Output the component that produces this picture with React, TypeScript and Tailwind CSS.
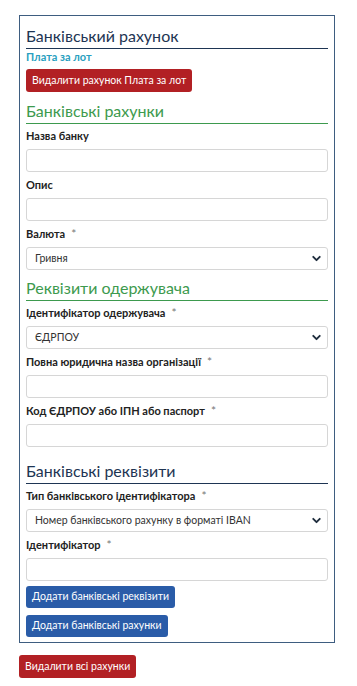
import { ChevronDown } from 'lucide-react';

const font = { fontFamily: 'Lato, "Liberation Sans", sans-serif' };

const Label = ({ text, req, first }: { text: string; req?: boolean; first?: boolean }) => (
  <div className={(first ? 'mt-[4px] ' : 'mt-[5px] ') + 'h-[16px] text-[11px] leading-[16px] font-bold text-[#222]'}>
    {text}
    {req && <span className="ml-[6px] text-[12px] font-normal text-[#777]">*</span>}
  </div>
);

const Input = () => (
  <div className="mt-[5px] h-[23px] w-full rounded-[3px] border border-[#d6d6d6] bg-white" />
);

const Select = ({ value }: { value: string }) => (
  <div className="mt-[5px] flex h-[23px] w-full items-center justify-between rounded-[3px] border border-[#d6d6d6] bg-white pl-[8px] pr-[4px] text-[10.5px] text-[#333]">
    <span>{value}</span>
    <ChevronDown className="h-[13px] w-[13px] text-[#1f2d3d]" strokeWidth={3.5} />
  </div>
);

const Heading = ({ text, color }: { text: string; color: 'navy' | 'green' }) => (
  <h3
    className={
      color === 'navy'
        ? 'h-[24px] border-b border-[#1e3553] text-[16px] leading-[22px] text-[#1e3553]'
        : 'h-[24px] border-b border-[#3d9a4e] text-[16px] leading-[22px] text-[#3d9a4e]'
    }
  >
    {text}
  </h3>
);

export default function App() {
  return (
    <div className="min-h-screen bg-white pt-[15px] pl-[19px]" style={font}>
      <div className="w-[316px] border border-[#3e5d80] px-[6px] pt-[9px] pb-[5px]">
        <Heading text="Банківський рахунок" color="navy" />
        <div className="h-[16px] text-[11px] leading-[16px] font-bold text-[#2a9fc0]">Плата за лот</div>
        <button className="mt-[4px] h-[23px] rounded-[3px] bg-[#b22024] px-[6px] text-[10.5px] text-white">
          Видалити рахунок Плата за лот
        </button>

        <div className="mt-[8px]">
          <Heading text="Банківські рахунки" color="green" />
        </div>
        <Label text="Назва банку" first />
        <Input />
        <Label text="Опис" />
        <Input />
        <Label text="Валюта" req />
        <Select value="Гривня" />

        <div className="mt-[7px]">
          <Heading text="Реквізити одержувача" color="green" />
        </div>
        <Label text="Ідентифікатор одержувача" req first />
        <Select value="ЄДРПОУ" />
        <Label text="Повна юридична назва організації" req />
        <Input />
        <Label text="Код ЄДРПОУ або ІПН або паспорт" req />
        <Input />

        <div className="mt-[13px]">
          <Heading text="Банківські реквізити" color="navy" />
        </div>
        <Label text="Тип банківського ідентифікатора" req first />
        <Select value="Номер банківського рахунку в форматі IBAN" />
        <Label text="Ідентифікатор" req />
        <Input />
        <div className="mt-[5px] flex flex-col items-start gap-[7px]">
          <button className="h-[22px] rounded-[3px] bg-[#2a5ca8] px-[6px] text-[10.5px] text-white">
            Додати банківські реквізити
          </button>
          <button className="h-[22px] rounded-[3px] bg-[#2a5ca8] px-[6px] text-[10.5px] text-white">
            Додати банківські рахунки
          </button>
        </div>
      </div>
      <button className="mt-[12px] h-[23px] rounded-[3px] bg-[#b22024] px-[6px] text-[10.5px] text-white">
        Видалити всі рахунки
      </button>
    </div>
  );
}
